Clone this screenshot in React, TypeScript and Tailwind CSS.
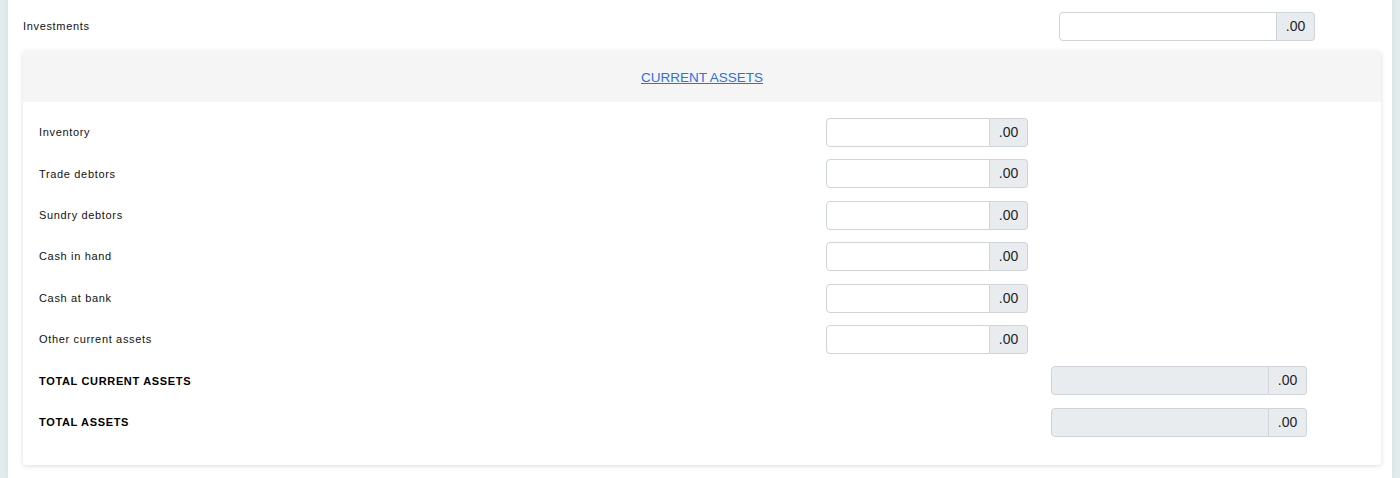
const items = [
  "Inventory",
  "Trade debtors",
  "Sundry debtors",
  "Cash in hand",
  "Cash at bank",
  "Other current assets",
];

const totals = ["TOTAL CURRENT ASSETS", "TOTAL ASSETS"];

function MoneyInput({ width, readOnly }: { width: string; readOnly?: boolean }) {
  return (
    <div className={`flex h-[29px] ${width}`}>
      <input
        readOnly={readOnly}
        className={`h-full min-w-0 flex-1 rounded-l-[4px] border border-[#ced4da] px-2 text-[14px] outline-none ${
          readOnly ? "bg-[#e9ecef]" : "bg-white"
        }`}
      />
      <span className="flex h-full w-[38px] shrink-0 items-center justify-center rounded-r-[4px] border border-l-0 border-[#ced4da] bg-[#e9ecef] text-[14px] text-[#212529]">
        .00
      </span>
    </div>
  );
}

export default function App() {
  return (
    <div
      className="min-h-screen bg-[#e2ecec] px-2"
      style={{ fontFamily: '"Liberation Sans", Arial, Helvetica, sans-serif' }}
    >
      <div className="min-h-[478px] bg-white pl-[15px] pr-[11px] shadow-[0_0_6px_rgba(0,0,0,0.06)]">
        <div className="flex items-center pt-3">
          <label className="w-[1036px] text-[11px] tracking-[0.06em] text-[#111]">Investments</label>
          <MoneyInput width="w-[256px]" />
        </div>

        <div className="mt-[10px] rounded-[3px] bg-white shadow-[0_1px_5px_rgba(0,0,0,0.14)]">
          <div className="flex h-[51px] items-center justify-center rounded-t-[3px] bg-[#f5f5f5] pt-1">
            <a href="#" className="text-[13.5px] text-[#2f6fe0] underline">
              CURRENT ASSETS
            </a>
          </div>
          <div className="flex flex-col gap-[12.4px] px-4 pb-[28px] pt-4">
            {items.map((item) => (
              <div key={item} className="grid grid-cols-[787px_225px_256px] items-center">
                <label className="text-[11px] tracking-[0.06em] text-[#111]">{item}</label>
                <MoneyInput width="w-[202px]" />
              </div>
            ))}
            {totals.map((t) => (
              <div key={t} className="grid grid-cols-[787px_225px_256px] items-center">
                <label className="text-[11px] font-bold tracking-[0.06em] text-black">{t}</label>
                <div />
                <MoneyInput width="w-[256px]" readOnly />
              </div>
            ))}
          </div>
        </div>
      </div>
    </div>
  );
}
